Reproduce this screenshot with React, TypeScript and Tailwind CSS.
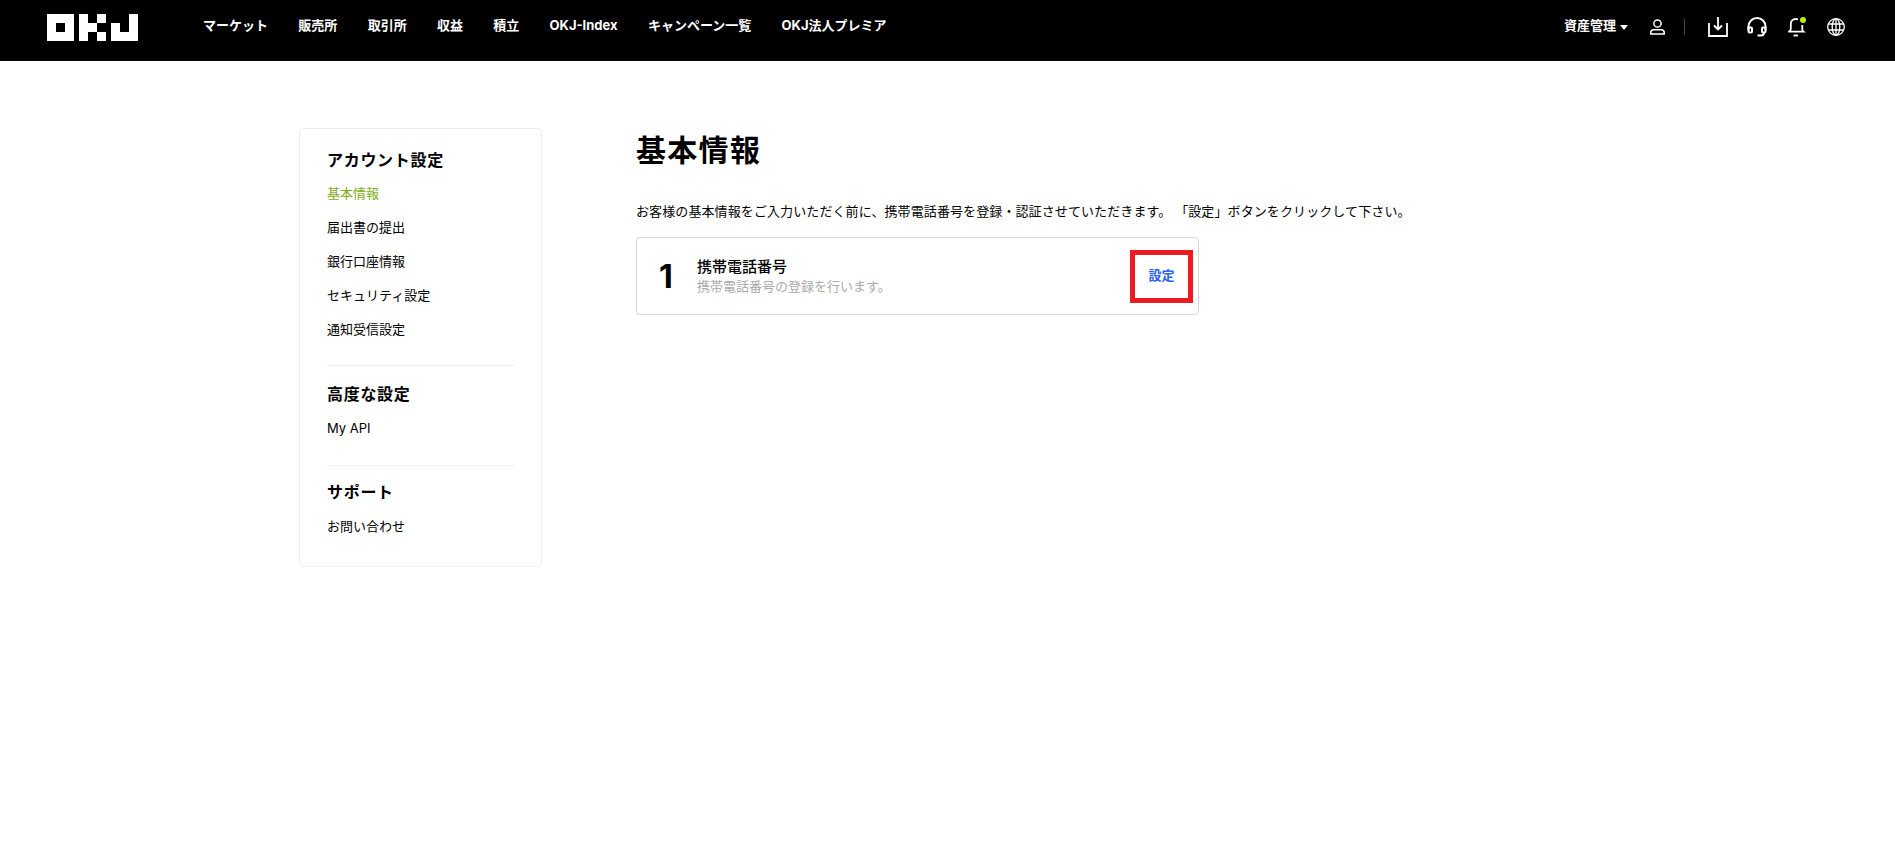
const FONT = "font-['Inter','Noto_Sans_CJK_JP',sans-serif]";

const navItems = ["マーケット", "販売所", "取引所", "収益", "積立", "OKJ-Index", "キャンペーン一覧", "OKJ法人プレミア"];

const Logo = () => (
  <svg width="91" height="27" viewBox="0 0 91 27" fill="#fff">
    <path fillRule="evenodd" d="M0 0h27v27H0z M9 9v9h9V9z" />
    <path d="M32 0h9v27h-9z M41 9h9v9h-9z M50 0h9v9h-9z M50 18h9v9h-9z" />
    <path d="M82 0h9v27H64V9h9v9h9z" />
  </svg>
);

const UserIcon = () => (
  <svg width="15" height="16" viewBox="0 0 15 16" fill="none" stroke="#fff" strokeWidth="1.5">
    <circle cx="7.500" cy="4.500" r="3.600" />
    <path d="M.8 15v-1.500c0-1.700 1.300-2.800 3-2.800h7.400c1.700 0 3 1.100 3 2.800V15z" />
  </svg>
);

const DownloadIcon = () => (
  <svg width="20" height="20" viewBox="0 0 20 20" fill="none" stroke="#fff" strokeWidth="1.800">
    <path d="M1 6v13h18V6" />
    <path d="M10 0v12" />
    <path d="M6 8.500l4 4 4-4" />
  </svg>
);

const HeadsetIcon = () => (
  <svg width="20" height="20" viewBox="0 0 20 20" fill="none" stroke="#fff" strokeWidth="2">
    <path d="M1.500 13V9.500a8.500 8.500 0 0 1 17 0V13" />
    <path d="M1.500 10.500h2.500c.6 0 1 .4 1 1v3c0 .6-.4 1-1 1H3c-.8 0-1.500-.7-1.500-1.500z" />
    <path d="M18.500 10.500H16c-.6 0-1 .4-1 1v3c0 .6.4 1 1 1h1c.8 0 1.500-.7 1.500-1.500z" />
    <path d="M17 15.500c0 1.800-1.200 3-3 3h-3.500" />
  </svg>
);

const BellIcon = () => (
  <div className="relative h-[20px] w-[19px]">
    <svg width="19" height="20" viewBox="0 0 19 20" fill="none" stroke="#fff" strokeWidth="1.800" className="absolute left-0 top-0">
      <path d="M11 2.400C10.300 2.100 9.500 2 8.700 2 5.700 2 3.800 4.200 3.800 7v5c0 1-.9 2-2.300 2.700h15c-.8-.6-1.200-1.300-1.200-2.300V8" />
      <path d="M6.500 18.500h4.500" />
    </svg>
    <span className="absolute right-0 top-0 h-[6px] w-[6px] rounded-full bg-[#b7f000]" />
  </div>
);

const GlobeIcon = () => (
  <svg width="18" height="18" viewBox="0 0 18 18" fill="none" stroke="#fff" strokeWidth="1.300">
    <circle cx="9" cy="9" r="8.300" />
    <ellipse cx="9" cy="9" rx="3.800" ry="8.300" />
    <path d="M9 .7v16.600M1.500 6h15M1.500 12h15" />
  </svg>
);

const Header = () => (
  <header className="flex h-[61px] items-center bg-black pb-[7px] pl-[47px] pr-[50px] text-white">
    <Logo />
    <nav className="ml-[65px] flex items-center gap-[30.3px] pb-[2px] text-[13px] font-bold">
      {navItems.map((item) => (
        <span key={item}>{item}</span>
      ))}
    </nav>
    <div className="ml-auto flex items-center">
      <span className="pb-[2px] text-[13px] font-bold">資産管理</span>
      <span className="ml-[4px] h-0 w-0 border-x-[4.5px] border-t-[5px] border-x-transparent border-t-white" />
      <span className="ml-[22px]"><UserIcon /></span>
      <span className="ml-[19px] h-[16px] w-px bg-[#444]" />
      <span className="ml-[23px]"><DownloadIcon /></span>
      <span className="ml-[19px]"><HeadsetIcon /></span>
      <span className="ml-[20px]"><BellIcon /></span>
      <span className="ml-[21px]"><GlobeIcon /></span>
    </div>
  </header>
);

const SideGroup = ({ title, items, active, listClass }: { title: string; items: string[]; active?: string; listClass: string }) => (
  <div>
    <h3 className="text-[16px] font-bold leading-[24px] tracking-[0.7px]">{title}</h3>
    <ul className={`text-[13px] leading-[34px] ${listClass}`}>
      {items.map((item) => (
        <li key={item} className={item === active ? "text-[#7fad12]" : "text-black"}>
          {item}
        </li>
      ))}
    </ul>
  </div>
);

const Sidebar = () => (
  <aside className="h-[439px] w-[243px] shrink-0 rounded-[4px] border border-[#eeeeee] px-[27px] pt-[19px]">
    <SideGroup title="アカウント設定" active="基本情報" listClass="mt-[4px]" items={["基本情報", "届出書の提出", "銀行口座情報", "セキュリティ設定", "通知受信設定"]} />
    <hr className="mb-[16px] mt-[19px] border-[#eeeeee]" />
    <SideGroup title="高度な設定" listClass="mt-[5px]" items={["My API"]} />
    <hr className="mb-[14px] mt-[20px] border-[#eeeeee]" />
    <SideGroup title="サポート" listClass="mt-[5px]" items={["お問い合わせ"]} />
  </aside>
);

export default function App() {
  return (
    <div className={`min-h-[861px] bg-white text-black ${FONT}`}>
      <Header />
      <main className="flex pl-[299px] pt-[67px]">
        <Sidebar />
        <section className="ml-[94px] w-[563px]">
          <h1 className="mt-[2px] text-[30px] font-bold leading-[40px] tracking-[1.3px]">基本情報</h1>
          <p className="mt-[31px] whitespace-nowrap text-[13px] leading-[20px] tracking-[0.1px]">
            お客様の基本情報をご入力いただく前に、携帯電話番号を登録・認証させていただきます。 「設定」ボタンをクリックして下さい。
          </p>
          <div className="mt-[16px] flex h-[78px] items-center rounded-[4px] border border-[#d5d5d5] pl-[22px] pr-[5px]">
            <span className="w-[38px] pt-[2px] text-[32px] font-bold leading-none">1</span>
            <div className="pt-[1px]">
              <div className="text-[15px] font-medium leading-[20px]">携帯電話番号</div>
              <div className="text-[13px] leading-[19px] text-[#aaaaaa]">携帯電話番号の登録を行います。</div>
            </div>
            <button className="ml-auto flex h-[53px] w-[63px] items-center justify-center border-[5px] border-[#ed1c24] text-[13px] font-bold text-[#2a62e8]">
              設定
            </button>
          </div>
        </section>
      </main>
    </div>
  );
}
